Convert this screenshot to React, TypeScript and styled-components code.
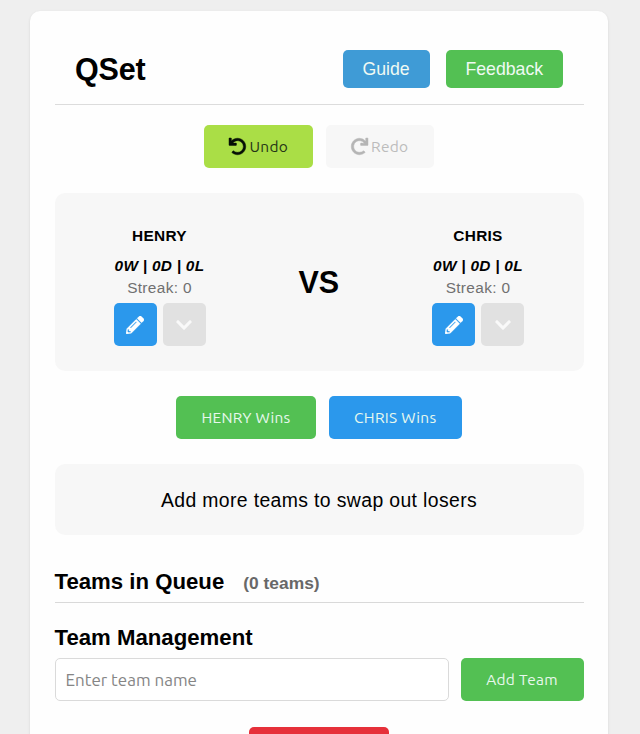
import React from "react";
import styled, { createGlobalStyle } from "styled-components";
import { FaUndo, FaRedo, FaPencilAlt, FaChevronDown } from "react-icons/fa";

const GlobalStyle = createGlobalStyle`
  * { box-sizing: border-box; }
  body {
    margin: 0;
    background: #efefef;
    color: #000;
    font-family: "Liberation Sans", Arial, sans-serif;
  }
`;

const Page = styled.div`
  height: 100vh;
  overflow: hidden;
  padding: 11px 32px 0 29.5px;
`;

const Card = styled.main`
  height: 900px;
  padding: 19px 24.5px 0 25px;
  background: #fefefe;
  border-radius: 10px;
  box-shadow: 0 1px 3px rgba(0, 0, 0, 0.1);
`;

const Header = styled.header`
  display: flex;
  align-items: center;
  justify-content: space-between;
  height: 75px;
  padding: 3px 20.5px 0 20.5px;
  border-bottom: 1px solid #dcdcdc;
`;

const Title = styled.h1`
  margin: 0;
  font-size: 30.5px;
  letter-spacing: -0.15px;
  line-height: 34px;
  padding-top: 1px;
`;

const Nav = styled.nav`
  display: flex;
  gap: 16px;
`;

const tones = {
  sky: "#3f9bd6",
  blue: "#2b98ec",
  green: "#53c053",
  lime: "#aade46",
  red: "#e6303a",
  muted: "#f7f7f7",
};

type Tone = keyof typeof tones;

const NavLink = styled.a<{ $tone: Tone; $width: number }>`
  display: flex;
  align-items: center;
  justify-content: center;
  width: ${(p) => p.$width}px;
  height: 38px;
  padding-top: 1px;
  border-radius: 5px;
  background: ${(p) => tones[p.$tone]};
  color: #effaf3;
  font-size: 17.7px;
`;

const Actions = styled.div<{ $top: number }>`
  display: flex;
  justify-content: center;
  gap: 12.5px;
  margin-top: ${(p) => p.$top}px;
`;

const Button = styled.button<{ $tone: Tone; $width: number; $color?: string }>`
  display: flex;
  flex: none;
  align-items: center;
  justify-content: center;
  gap: 3px;
  width: ${(p) => p.$width}px;
  height: 43px;
  padding: 0;
  border: 0;
  border-radius: 5px;
  background: ${(p) => tones[p.$tone]};
  color: ${(p) => p.$color ?? "#e8f8ee"};
  font-family: Ubuntu, "Noto Sans", sans-serif;
  font-size: 15.45px;
  letter-spacing: 0.3px;

  svg {
    width: 17px;
    height: 17px;
    color: ${(p) => (p.$tone === "lime" ? "#061006" : "#b5b5b5")};
    stroke: currentColor;
    stroke-width: 14px;
    overflow: visible;
  }
`;

const Match = styled.section`
  display: flex;
  justify-content: space-between;
  height: 178px;
  margin-top: 25px;
  padding: 34px 59.5px 0 59px;
  border-radius: 10px;
  background: #f7f7f7;
`;

const Player = styled.div`
  display: flex;
  flex-direction: column;
  align-items: center;
  width: 92px;
  white-space: nowrap;
`;

const PlayerName = styled.strong`
  font-size: 15.4px;
  letter-spacing: 0.3px;
  line-height: 18px;
`;

const PlayerRecord = styled.em`
  margin-top: 12px;
  font-size: 15.4px;
  font-weight: bold;
  letter-spacing: 0.28px;
  line-height: 18px;
`;

const Streak = styled.span`
  margin-top: 4px;
  color: #707070;
  font-size: 15.4px;
  letter-spacing: 0.35px;
  line-height: 18px;
`;

const PlayerTools = styled.div`
  display: flex;
  gap: 6px;
  margin-top: 6px;
`;

const IconButton = styled.button<{ $disabled?: boolean }>`
  display: flex;
  align-items: center;
  justify-content: center;
  width: 43px;
  height: 43px;
  padding: 0;
  border: 0;
  border-radius: 5px;
  background: ${(p) => (p.$disabled ? "#e1e1e1" : tones.blue)};
  color: ${(p) => (p.$disabled ? "#f9f9f9" : "#fff")};

  svg {
    width: 18px;
    height: 18px;
    stroke: currentColor;
    stroke-width: 8px;
  }
`;

const Versus = styled.div`
  padding-top: 38px;
  font-size: 30.5px;
  font-weight: bold;
  line-height: 34px;
`;

const Notice = styled.section`
  display: flex;
  align-items: center;
  justify-content: center;
  height: 71px;
  margin-top: 25px;
  padding-top: 1px;
  border-radius: 10px;
  background: #f7f7f7;
  font-size: 19.4px;
  letter-spacing: 0.37px;
`;

const QueueHeading = styled.h2`
  display: flex;
  align-items: baseline;
  gap: 19px;
  height: 35px;
  margin: 33px 0 0;
  border-bottom: 1px solid #d9d9d9;
  font-size: 22.2px;
  line-height: 27px;
`;

const Count = styled.span`
  color: #686868;
  font-size: 17.4px;
`;

const Heading = styled.h2`
  margin: 21px 0 0;
  font-size: 22.2px;
  line-height: 27px;
`;

const TeamForm = styled.div`
  display: flex;
  gap: 12px;
  margin-top: 7px;
`;

const TeamInput = styled.input`
  flex: 1;
  min-width: 0;
  height: 43px;
  padding: 0 10px;
  border: 1px solid #dadada;
  border-radius: 5px;
  background: #fff;
  font-family: Ubuntu, "Noto Sans", sans-serif;
  font-size: 17px;

  &::placeholder {
    color: #858585;
  }
`;

function PlayerCard({ name }: { name: string }) {
  return (
    <Player>
      <PlayerName>{name}</PlayerName>
      <PlayerRecord>0W | 0D | 0L</PlayerRecord>
      <Streak>Streak: 0</Streak>
      <PlayerTools>
        <IconButton aria-label={`Edit ${name}`}><FaPencilAlt /></IconButton>
        <IconButton $disabled disabled aria-label={`Move ${name} down`}><FaChevronDown /></IconButton>
      </PlayerTools>
    </Player>
  );
}

export default function App() {
  return (
    <Page>
      <GlobalStyle />
      <Card>
        <Header>
          <Title>QSet</Title>
          <Nav>
            <NavLink $tone="sky" $width={87}>Guide</NavLink>
            <NavLink $tone="green" $width={117.5}>Feedback</NavLink>
          </Nav>
        </Header>
        <Actions $top={20}>
          <Button $tone="lime" $width={109} $color="#253516"><FaUndo />Undo</Button>
          <Button $tone="muted" $width={108} $color="#bcbcbc" disabled><FaRedo />Redo</Button>
        </Actions>
        <Match>
          <PlayerCard name="HENRY" />
          <Versus>VS</Versus>
          <PlayerCard name="CHRIS" />
        </Match>
        <Actions $top={25}>
          <Button $tone="green" $width={140}>HENRY Wins</Button>
          <Button $tone="blue" $width={133.5}>CHRIS Wins</Button>
        </Actions>
        <Notice>Add more teams to swap out losers</Notice>
        <QueueHeading>Teams in Queue <Count>(0 teams)</Count></QueueHeading>
        <Heading>Team Management</Heading>
        <TeamForm>
          <TeamInput placeholder="Enter team name" />
          <Button $tone="green" $width={123}>Add Team</Button>
        </TeamForm>
        <Actions $top={26}>
          <Button $tone="red" $width={140} />
        </Actions>
      </Card>
    </Page>
  );
}
